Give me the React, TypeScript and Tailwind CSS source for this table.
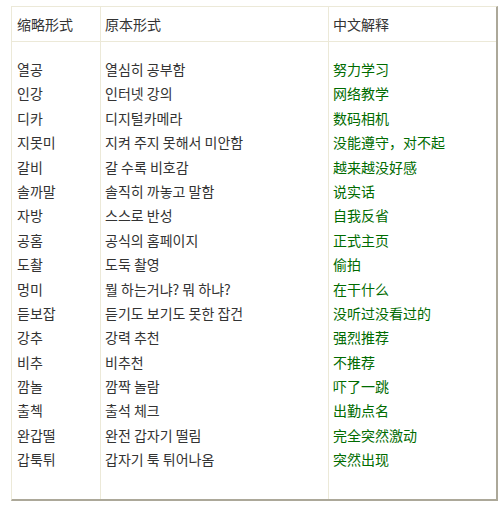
import React from 'react';

const rows: [string, string, string][] = [
  ['열공', '열심히 공부함', '努力学习'],
  ['인강', '인터넷 강의', '网络教学'],
  ['디카', '디지털카메라', '数码相机'],
  ['지못미', '지켜 주지 못해서 미안함', '没能遵守，对不起'],
  ['갈비', '갈 수록 비호감', '越来越没好感'],
  ['솔까말', '솔직히 까놓고 말함', '说实话'],
  ['자방', '스스로 반성', '自我反省'],
  ['공홈', '공식의 홈페이지', '正式主页'],
  ['도촬', '도둑 촬영', '偷拍'],
  ['멍미', '뭘 하는거냐? 뭐 하냐?', '在干什么'],
  ['듣보잡', '듣기도 보기도 못한 잡건', '没听过没看过的'],
  ['강추', '강력 추천', '强烈推荐'],
  ['비추', '비추천', '不推荐'],
  ['깜놀', '깜짝 놀람', '吓了一跳'],
  ['출첵', '출석 체크', '出勤点名'],
  ['완갑떨', '완전 갑자기 떨림', '完全突然激动'],
  ['갑툭튀', '갑자기 툭 튀어나옴', '突然出现'],
];

const App: React.FC = () => {
  return (
    <div className="w-[502px] h-[508px] bg-white pt-[6px] pl-[11px]">
      <div className="w-[487px] border-l border-t border-[#ece9d8] border-r-2 border-b-2 border-r-[#aca899] border-b-[#aca899] grid grid-cols-[89px_228px_1fr] text-[14px] font-['Noto_Sans_CJK_SC','Noto_Sans_CJK_KR',sans-serif]">
        <div className="h-[35px] flex items-center pl-[5px] border-r border-b border-[#ece9d8] text-[#333]">缩略形式</div>
        <div className="h-[35px] flex items-center pl-[4px] border-r border-b border-[#ece9d8] text-[#333]">原本形式</div>
        <div className="h-[35px] flex items-center pl-[4px] border-b border-[#ece9d8] text-[#333]">中文解释</div>

        <div className="pt-[15px] pb-[27px] pl-[5px] border-r border-[#ece9d8] text-[#333] font-['Noto_Sans_CJK_KR',sans-serif]">
          {rows.map((r) => (
            <div key={r[0]} className="h-[24.4px] leading-[24.4px] whitespace-nowrap">{r[0]}</div>
          ))}
        </div>
        <div className="pt-[15px] pb-[27px] pl-[4px] border-r border-[#ece9d8] text-[#333] font-['Noto_Sans_CJK_KR',sans-serif]">
          {rows.map((r) => (
            <div key={r[1]} className="h-[24.4px] leading-[24.4px] whitespace-nowrap">{r[1]}</div>
          ))}
        </div>
        <div className="pt-[15px] pb-[27px] pl-[4px] text-[#006b00]">
          {rows.map((r) => (
            <div key={r[2]} className="h-[24.4px] leading-[24.4px] whitespace-nowrap">{r[2]}</div>
          ))}
        </div>
      </div>
    </div>
  );
};

export default App;
